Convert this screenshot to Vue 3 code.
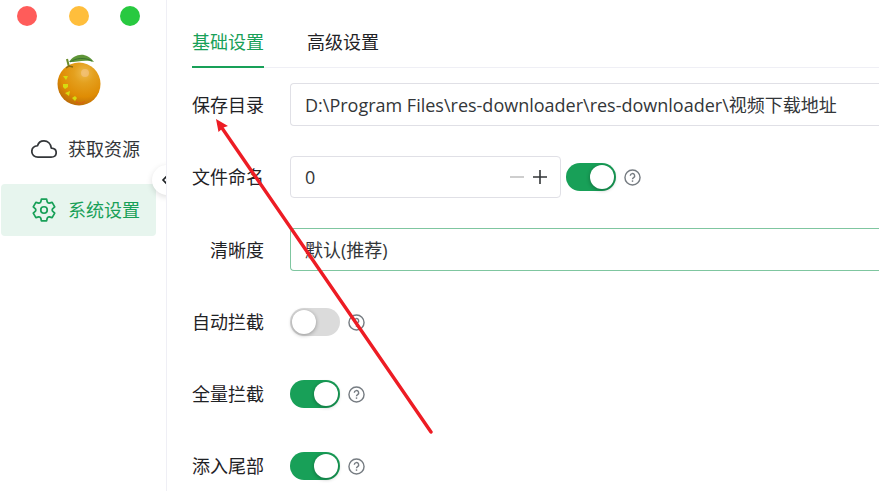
<template>
  <div class="app-layout">
    <aside class="sidebar">
      <div class="window-controls">
        <button class="window-dot window-dot--close" aria-label="关闭"></button>
        <button class="window-dot window-dot--min" aria-label="最小化"></button>
        <button class="window-dot window-dot--max" aria-label="最大化"></button>
      </div>

      <svg class="logo" width="46" height="54" viewBox="0 0 46 54">
        <defs>
          <radialGradient id="peel" cx="0.62" cy="0.24" r="0.8">
            <stop offset="0" stop-color="#edb94a" />
            <stop offset="0.3" stop-color="#e4a01e" />
            <stop offset="0.7" stop-color="#df8c04" />
            <stop offset="1" stop-color="#b96a08" />
          </radialGradient>
        </defs>
        <circle cx="23" cy="31" r="21.5" fill="url(#peel)" />
        <path d="M13 9C18 1 30-2 38 9C29 6 22 9 13 9Z" fill="#5f9638" />
        <path d="M14 9C20 5 28 4 36 8" stroke="#3c7432" stroke-width="1" fill="none" />
        <path d="M11 6L13 14" stroke="#6b8d2c" stroke-width="2" fill="none" />
        <path d="M10 15L13 13L17 14" stroke="#8a6a10" stroke-width="1.500" fill="none" />
        <circle cx="29" cy="20" r="4" fill="#f7c99a" opacity="0.5" />
        <g fill="#d6da10">
          <path d="M7 23h5l-2 4z" />
          <path d="M7 31h5v3l-3 2-2-2z" />
          <path d="M9 40l5-2-1 5z" />
          <path d="M16 45l3-2 2 2-2 3z" />
        </g>
        <path d="M20 49q5 3 9-1" stroke="#e2501c" stroke-width="1" stroke-dasharray="2 1" fill="none" />
      </svg>

      <nav class="menu">
        <a href="#" class="menu-item">
          <svg width="26" height="26" viewBox="0 0 512 512" fill="none" stroke="currentColor" stroke-width="34" stroke-linejoin="round"><path d="M400 240c-8.890-89.540-71-144-144-144-69 0-113.440 48.200-128 96-60 6-112 43.590-112 112 0 66 54 112 120 112h260c55 0 100-27.440 100-88 0-59.820-53-85.760-96-88z" /></svg>
          <span>获取资源</span>
        </a>
        <a href="#" class="menu-item menu-item--active">
          <svg width="26" height="26" viewBox="0 0 24 24" fill="none" stroke="currentColor" stroke-width="1.600" stroke-linecap="round" stroke-linejoin="round"><path d="M9.600 2h4.800L15 4.600Q15.600 5.900 16.900 5.700L19.500 4.900L21.900 9.100L19.900 10.900Q19.100 12 19.900 13.100L21.900 14.900L19.500 19.100L16.900 18.300Q15.600 18.100 15 19.400L14.400 22H9.600L9 19.400Q8.400 18.100 7.100 18.300L4.500 19.100L2.100 14.900L4.100 13.100Q4.900 12 4.100 10.900L2.100 9.100L4.500 4.900L7.100 5.700Q8.400 5.900 9 4.600Z" /><circle cx="12" cy="12" r="3" /></svg>
          <span>系统设置</span>
        </a>
      </nav>

      <button class="collapse-btn" aria-label="收起菜单">
        <svg width="16" height="16" viewBox="0 0 16 16" fill="none" stroke="currentColor" stroke-width="1.600"><path d="M9.500 3.500L5 8L9.500 12.500" /></svg>
      </button>
    </aside>

    <main class="content">
      <div class="tabs">
        <button
          v-for="tab in tabs"
          :key="tab"
          class="tab"
          :class="{ 'tab--active': tab === activeTab }"
          @click="activeTab = tab"
        >{{ tab }}</button>
      </div>

      <form class="settings" @submit.prevent>
        <div class="form-row form-row--field">
          <label class="form-label" for="save-dir">保存目录</label>
          <input id="save-dir" v-model="saveDir" class="field" type="text" />
        </div>

        <div class="form-row">
          <label class="form-label" for="name-len">文件命名</label>
          <div class="number-field">
            <input id="name-len" v-model.number="nameLen" class="number-input" type="text" />
            <button type="button" class="step-btn" aria-label="减少" :disabled="nameLen <= 0" @click="nameLen--">
              <svg width="16" height="16" viewBox="0 0 16 16" stroke="currentColor" stroke-width="1.600"><path d="M1 8h14" /></svg>
            </button>
            <button type="button" class="step-btn" aria-label="增加" @click="nameLen++">
              <svg width="16" height="16" viewBox="0 0 16 16" stroke="currentColor" stroke-width="1.600"><path d="M1 8h14M8 1v14" /></svg>
            </button>
          </div>
          <input v-model="nameByTime" class="switch switch--inline" type="checkbox" aria-label="文件命名开关" />
          <svg class="help" width="17" height="17" viewBox="0 0 18 18" fill="none" stroke="currentColor" stroke-width="1.500"><circle cx="9" cy="9" r="8" /><path d="M6.700 7.200a2.300 2.300 0 1 1 3.500 1.900c-.8.500-1.200.9-1.200 1.800" /><path d="M9 12v1.600" /></svg>
        </div>

        <div class="form-row form-row--field">
          <label class="form-label" for="quality">清晰度</label>
          <select id="quality" v-model="quality" class="field field--focus">
            <option>默认(推荐)</option>
          </select>
        </div>

        <div v-for="item in switches" :key="item.id" class="form-row">
          <label class="form-label" :for="item.id">{{ item.label }}</label>
          <input :id="item.id" v-model="item.on" class="switch" type="checkbox" />
          <svg class="help" width="17" height="17" viewBox="0 0 18 18" fill="none" stroke="currentColor" stroke-width="1.500"><circle cx="9" cy="9" r="8" /><path d="M6.700 7.200a2.300 2.300 0 1 1 3.500 1.900c-.8.500-1.200.9-1.200 1.800" /><path d="M9 12v1.600" /></svg>
        </div>
      </form>
    </main>

    <!-- Pointer to the save directory -->
    <svg class="arrow" width="220" height="318" viewBox="0 0 220 318">
      <path d="M216 313L7 9" stroke="#ed1c24" stroke-width="3.400" stroke-linecap="round" />
      <path d="M1 0L13 7L8.500 8.500L3.500 13Z" fill="#ed1c24" />
    </svg>
  </div>
</template>

<script setup>
import { ref } from 'vue'

const tabs = ['基础设置', '高级设置']
const activeTab = ref('基础设置')

const saveDir = ref('D:\\Program Files\\res-downloader\\res-downloader\\视频下载地址')
const nameLen = ref(0)
const nameByTime = ref(true)
const quality = ref('默认(推荐)')

const switches = ref([
  { id: 'auto-proxy', label: '自动拦截', on: false },
  { id: 'full-intercept', label: '全量拦截', on: true },
  { id: 'insert-tail', label: '添入尾部', on: true }
])
</script>

<style>
body {
  margin: 0;
  background: #fff;
  overflow: hidden;
}
</style>

<style scoped>
.app-layout {
  position: relative;
  display: flex;
  min-height: 100vh;
  font-family: "Open Sans", "Noto Sans CJK SC", sans-serif;
  font-size: 18px;
  line-height: 26px;
  color: #1f2225;
}
button,
input,
select {
  font: inherit;
  color: inherit;
  margin: 0;
}
button {
  padding: 0;
  border: none;
  background: none;
  cursor: pointer;
}

/* Sidebar */
.sidebar {
  position: relative;
  flex: 0 0 167px;
  box-sizing: border-box;
  display: flex;
  flex-direction: column;
  border-right: 1px solid #efeff5;
  overflow: hidden;
}
.window-controls {
  display: flex;
  justify-content: space-between;
  padding: 6px 26px 0 17px;
}
.window-dot {
  width: 20px;
  height: 20px;
  border-radius: 50%;
}
.window-dot--close {
  background: #ff5c5a;
}
.window-dot--min {
  background: #ffbe3c;
}
.window-dot--max {
  background: #28c940;
}
.logo {
  align-self: center;
  margin: 27px 8px 16px 0;
}
.menu {
  display: flex;
  flex-direction: column;
  gap: 9px;
  padding: 0 10px 0 1px;
}
.menu-item {
  display: flex;
  align-items: center;
  gap: 11px;
  height: 52px;
  padding-left: 30px;
  border-radius: 4px;
  color: #333639;
  text-decoration: none;
}
.menu-item--active {
  background: #e7f5ee;
  color: #18a058;
}
.collapse-btn {
  position: absolute;
  top: 165px;
  right: -16px;
  width: 30px;
  height: 30px;
  display: flex;
  align-items: center;
  padding-left: 6px;
  border-radius: 50%;
  background: #fff;
  box-shadow: 0 2px 6px #0002;
}

/* Content */
.content {
  flex: 1;
  min-width: 0;
  padding-left: 25px;
}
.tabs {
  display: flex;
  gap: 43px;
  padding-top: 28px;
  border-bottom: 1px solid #efeff5;
}
.tab {
  height: 40px;
  padding-bottom: 10px;
  margin-bottom: -1px;
  border-bottom: 2px solid transparent;
}
.tab--active {
  color: #18a058;
  border-bottom-color: #18a058;
}
.settings {
  display: flex;
  flex-direction: column;
  gap: 30px;
  padding-top: 15px;
}
.form-row {
  display: flex;
  align-items: center;
  height: 42px;
}
.form-row--field {
  height: 43px;
}
.form-label {
  flex: 0 0 72px;
  margin-right: 26px;
  text-align: right;
}
.field {
  flex: 1;
  min-width: 0;
  align-self: stretch;
  box-sizing: border-box;
  padding: 0 14px;
  border: 1px solid #e0e0e6;
  border-right: none;
  border-radius: 4px 0 0 4px;
  outline: none;
  appearance: none;
  background: #fff;
  color: #333639;
}
.field--focus {
  border-color: #7fc6a0;
}
.number-field {
  flex: 0 0 271px;
  min-width: 0;
  width: 271px;
  align-self: stretch;
  box-sizing: border-box;
  display: flex;
  align-items: center;
  gap: 7px;
  padding: 0 12px 0 14px;
  border: 1px solid #e0e0e6;
  border-radius: 4px;
  color: #333639;
}
.number-input {
  flex: 1;
  min-width: 0;
  padding: 0;
  border: none;
  outline: none;
  background: none;
}
.step-btn {
  display: flex;
}
.step-btn:disabled {
  color: #c2c2c2;
}
.switch {
  flex: 0 0 50px;
  height: 28px;
  appearance: none;
  display: flex;
  align-items: center;
  padding: 0 2px;
  box-sizing: border-box;
  border-radius: 14px;
  background: #dbdbdb;
  cursor: pointer;
}
.switch::before {
  content: "";
  width: 24px;
  height: 24px;
  border-radius: 50%;
  background: #fff;
  box-shadow: 0 1px 4px #0005;
}
.switch:checked {
  justify-content: flex-end;
  background: #18a058;
}
.switch--inline {
  margin-left: 5px;
}
.help {
  margin-left: 8px;
  color: #767c82;
}
.arrow {
  position: absolute;
  top: 119px;
  left: 215px;
  pointer-events: none;
}
</style>
